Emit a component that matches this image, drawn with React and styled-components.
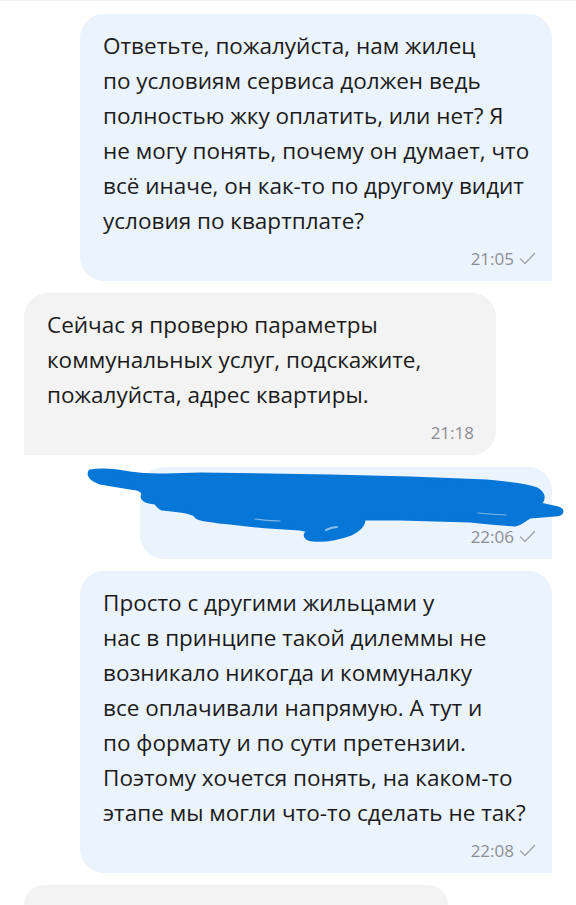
import React from "react";
import styled, { createGlobalStyle } from "styled-components";

const GlobalStyle = createGlobalStyle`
  html, body {
    margin: 0;
    padding: 0;
    background: #ffffff;
  }
  body {
    font-family: "Open Sans", "Noto Sans", sans-serif;
    -webkit-font-smoothing: antialiased;
  }
`;

const messages = [
    {
        id: 1,
        out: true,
        time: "21:05",
        text: "Ответьте, пожалуйста, нам жилец\nпо условиям сервиса должен ведь\nполностью жку оплатить, или нет? Я\nне могу понять, почему он думает, что\nвсё иначе, он как-то по другому видит\nусловия по квартплате?",
    },
    {
        id: 2,
        out: false,
        time: "21:18",
        text: "Сейчас я проверю параметры\nкоммунальных услуг, подскажите,\nпожалуйста, адрес квартиры.",
    },
    {
        id: 3,
        out: true,
        time: "22:06",
        text: "",
        hidden: true,
    },
    {
        id: 4,
        out: true,
        time: "22:08",
        text: "Просто с другими жильцами у\nнас в принципе такой дилеммы не\nвозникало никогда и коммуналку\nвсе оплачивали напрямую. А тут и\nпо формату и по сути претензии.\nПоэтому хочется понять, на каком-то\nэтапе мы могли что-то сделать не так?",
    },
];

const Check = () => (
    <svg width="17" height="13" viewBox="0 0 17 13">
        <path d="M1.5 7 L6 11.5 L15.5 1.5" fill="none" stroke="#a3a6ab" strokeWidth="1.4" strokeLinecap="round" strokeLinejoin="round" />
    </svg>
);

// синяя закраска поверх сообщения
const Scribble = () => (
    <StScribble viewBox="0 460 576 90" width="576" height="90">
        <path
            fill="#0677d6"
            stroke="#0677d6"
            strokeWidth="3"
            strokeLinejoin="round"
            d="M90 472 C100 470 115 471 130 474 C150 477 170 476 200 475 L330 477 C380 478 420 479 487 482 C510 484 527 486 537 490 C544 494 545 500 540 505 L558 509 C564 511 563 516 555 516 L530 518 C524 521 522 525 515 526 C500 525 490 524 470 522 L400 520 L364 520 C364 526 359 532 351 535 C340 539 325 542 313 541 C304 540 303 535 309 532 L300 530 C280 529 260 528 230 524 C215 522 200 522 196 518 C195 514 185 512 162 510 C157 508 158 506 155 504 C145 503 140 500 143 495 C142 491 138 490 130 489 L100 484 C92 481 87 477 90 472 Z"
        />
        <g fill="none" strokeLinecap="round" opacity="0.6">
            <path stroke="#cfe0f5" strokeWidth="1.2" d="M255 520 C265 521 273 522 280 522" />
            <path stroke="#e3edf9" strokeWidth="2" d="M326 531 C330 529 334 528 337 528" />
            <path stroke="#cfe0f5" strokeWidth="1.2" d="M478 514 C488 515 497 516 506 516" />
        </g>
    </StScribble>
);

const App = () => {
    return (
        <>
            <GlobalStyle />
            <StChat>
                {messages.map((m) => (
                    <StRow key={m.id} $out={m.out}>
                        <StBubble $out={m.out} $width={m.id === 3 ? 412 : 472}>
                            {m.hidden ? <StText>&nbsp;</StText> : <StText>{m.text}</StText>}
                            <StMeta $out={m.out}>
                                <StTime>{m.time}</StTime>
                                {m.out && <Check />}
                            </StMeta>
                        </StBubble>
                        {m.hidden && <Scribble />}
                    </StRow>
                ))}
                <StRow $out={false}>
                    <StBubble $out={false} $width={424} $height={40} />
                </StRow>
            </StChat>
        </>
    );
};

export default App;

const StChat = styled.div`
  width: 576px;
  height: 905px;
  overflow: hidden;
  display: flex;
  flex-direction: column;
  gap: 12px;
  padding-top: 13px;
  box-sizing: border-box;
  background: #ffffff;
  border-top: 1px solid #f1f1f1;
`;

const StRow = styled.div`
  position: relative;
  display: flex;
  justify-content: ${(p) => (p.$out ? "flex-end" : "flex-start")};
  padding: 0 24px;
  flex-shrink: 0;
`;

const StBubble = styled.div`
  width: ${(p) => p.$width}px;
  ${(p) => (p.$height ? `height: ${p.$height}px;` : "")}
  box-sizing: border-box;
  padding: 14px 16px 13px 23px;
  background: ${(p) => (p.$out ? "#ebf3fd" : "#f3f3f3")};
  border-radius: ${(p) => (p.$out ? "24px 24px 0 24px" : "24px 24px 24px 0")};
  color: #1b1b1b;
`;

const StText = styled.div`
  font-size: 22.5px;
  line-height: 35px;
  white-space: pre-line;
`;

const StMeta = styled.div`
  display: flex;
  justify-content: flex-end;
  align-items: center;
  gap: 5px;
  height: 20px;
  margin-top: 10px;
  padding-right: ${(p) => (p.$out ? "0" : "6px")};
`;

const StTime = styled.span`
  font-size: 17px;
  color: #8b8e93;
`;

const StScribble = styled.svg`
  position: absolute;
  left: 0;
  top: -8px;
  pointer-events: none;
`;
